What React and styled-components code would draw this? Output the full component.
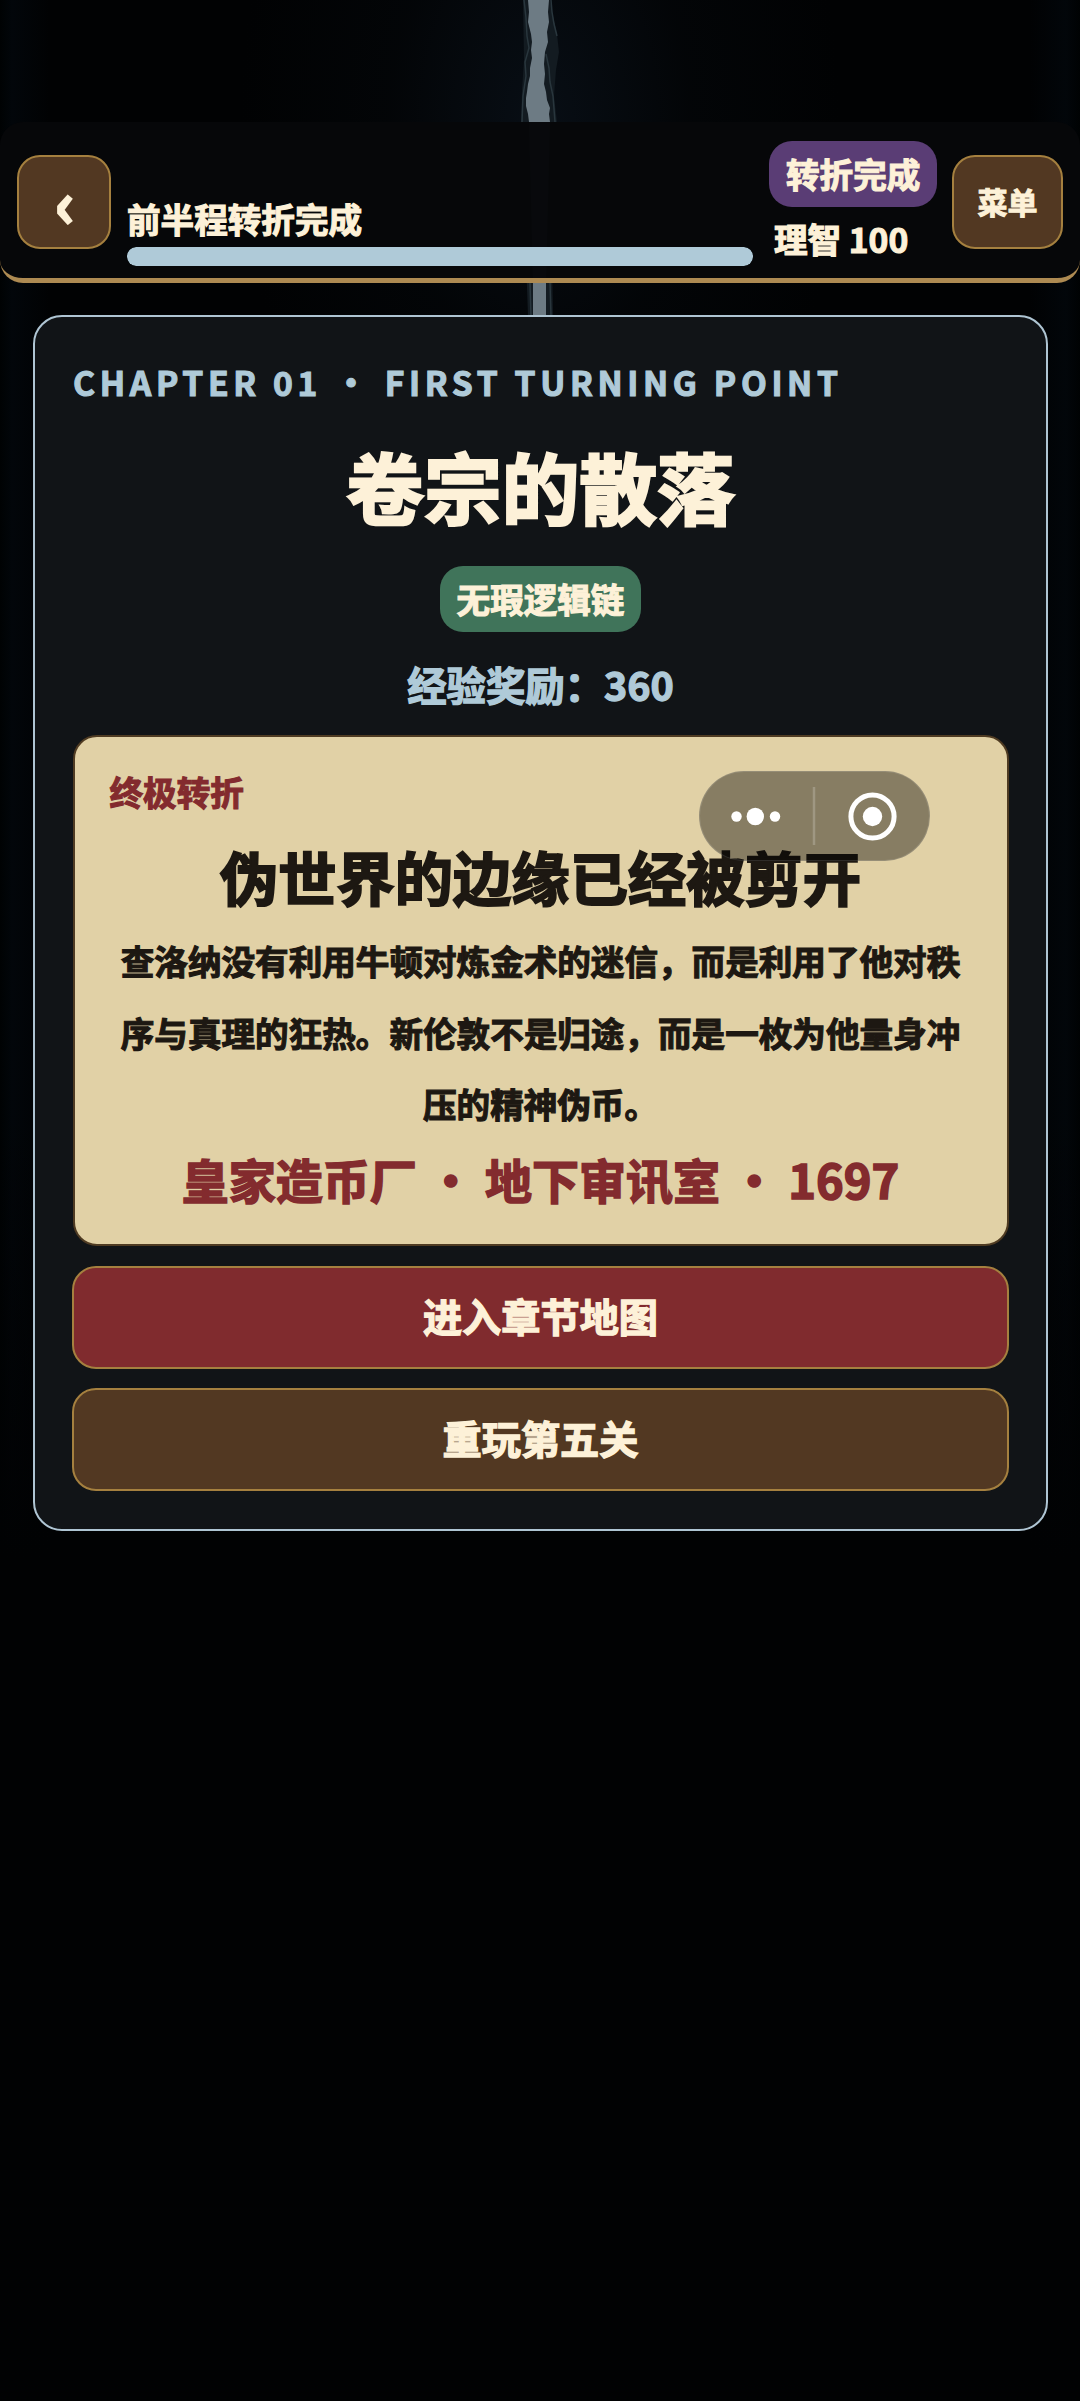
import React from 'react';
import styled, { createGlobalStyle } from 'styled-components';

const GlobalStyle = createGlobalStyle`
  * {
    box-sizing: border-box;
    -webkit-text-stroke: 0.034em currentColor;
  }

  body {
    margin: 0;
    background: #010203;
    font-family: 'Noto Sans CJK SC', sans-serif;
    font-weight: 700;
    color: #fdf1d8;
  }
`;

const Page = styled.div`
  position: relative;
  width: 1080px;
  height: 2401px;
  padding-top: 122px;
  overflow: hidden;
  background:
    radial-gradient(ellipse 300px 480px at 540px 120px, #080e15 0%, rgba(4, 7, 10, 0.6) 50%, rgba(1, 2, 3, 0) 100%),
    linear-gradient(180deg, rgba(1, 2, 3, 0) 1100px, #010203 1560px),
    linear-gradient(90deg, #000203 0, #02060a 12px, #010203 50px, #010203 1030px, #02060a 1066px, #000203 1080px);
`;

const Rift = styled.svg`
  position: absolute;
  left: 500px;
  top: 0;
  width: 80px;
  height: 316px;
`;

const Header = styled.header`
  position: relative;
  display: flex;
  align-items: flex-start;
  height: 161px;
  padding: 19px 17px 0;
  background: rgba(6, 7, 9, 0.98);
  border-bottom: 5px solid #ad8a52;
  border-radius: 23px;
`;

const HeaderButton = styled.button`
  width: ${({ $width }) => $width}px;
  height: 94px;
  margin: 14px 0 0;
  padding: ${({ $pad }) => $pad};
  background: #523822;
  border: 2px solid #a5803f;
  border-radius: 23px;
  color: #fdf1d8;
  font: inherit;
  font-size: ${({ $size }) => $size}px;
  line-height: 1;
`;

const Progress = styled.div`
  width: 626px;
  margin: 54px 0 0 16px;
`;

const Stage = styled.div`
  font-size: 33.6px;
  line-height: 48px;
`;

const Track = styled.div`
  height: 19px;
  margin-top: 4px;
  border-radius: 9px;
  background: #1c2226;
  overflow: hidden;
`;

const Fill = styled.div`
  height: 100%;
  background: #afcad8;
  border-radius: 9px;
`;

const Status = styled.div`
  width: 168px;
  margin: 0 15px 0 16px;
`;

const Badge = styled.span`
  display: block;
  width: fit-content;
  height: 66px;
  padding: 0 17px;
  border-radius: 23px;
  background: ${({ $color }) => $color};
  font-size: 33.6px;
  line-height: 66px;
  white-space: nowrap;
`;

const Sanity = styled.div`
  padding: 8px 0 0 5px;
  font-size: 33.6px;
  line-height: 48px;
  white-space: nowrap;
`;

const Panel = styled.main`
  position: relative;
  display: flex;
  flex-direction: column;
  align-items: center;
  width: 1015px;
  height: 1216px;
  margin: 32px 0 0 33px;
  padding: 0 38px;
  background: rgba(17, 20, 23, 0.99);
  border: 2px solid #afc5d3;
  border-radius: 29px;
`;

const Eyebrow = styled.div`
  align-self: flex-start;
  margin-top: 39px;
  font-size: 33.6px;
  line-height: 52px;
  letter-spacing: 4.65px;
  color: #afcad8;
  white-space: pre;
`;

const Title = styled.h1`
  margin: 22px 0 26px;
  font-size: 77.7px;
  line-height: 110px;
`;

const Reward = styled.div`
  margin: 23px 0 22px;
  font-size: 39.4px;
  line-height: 58px;
  color: #afcad8;
`;

const Paper = styled.section`
  display: flex;
  flex-direction: column;
  align-items: center;
  width: 936px;
  height: 511px;
  padding: 0 35px;
  background: #e1d1a6;
  border: 2px solid #4f3b22;
  border-radius: 24px;
  color: #1d1812;
`;

const Label = styled.div`
  align-self: flex-start;
  margin-top: 31px;
  font-size: 33.6px;
  line-height: 48px;
  color: #832b2e;
`;

const Heading = styled.h2`
  margin: 19px 0 8px;
  font-size: 58.3px;
  line-height: 82px;
`;

const Story = styled.p`
  width: 842px;
  margin: 0;
  font-size: 33.6px;
  line-height: 71.7px;
  text-align: center;
`;

const Place = styled.div`
  margin-top: 5px;
  font-size: 47px;
  line-height: 68px;
  color: #832b2e;
  white-space: pre;
`;

const Action = styled.button`
  width: 937px;
  height: 103px;
  flex: none;
  margin: ${({ $gap }) => $gap}px 0 0;
  padding: 0 0 4px;
  background: ${({ $color }) => $color};
  border: 2px solid #a5803f;
  border-radius: 24px;
  color: #fdf1d8;
  font: inherit;
  font-size: 39.2px;
  line-height: 1;
`;

const Capsule = styled.div`
  position: absolute;
  left: 699px;
  top: 771px;
  width: 231px;
  height: 90px;
  background: rgba(0, 0, 0, 0.4);
  border: 1px solid rgba(255, 255, 255, 0.12);
  border-radius: 45px;

  svg {
    display: block;
  }
`;

const App = () => {
  const progress = 100;

  return (
    <Page>
      <GlobalStyle />
      <Rift viewBox="0 0 80 316">
        <path d="M23 0 L24 60 L22 90 L21 122 L26 260 L28 316 H53 L52 260 L57 122 L54 96 L56 70 L59 52 L57 34 L53 16 L50 0Z" fill="#131b21" />
        <path d="M28 0 L29 12 L28 22 L31 34 L32 42 L31 50 L32 58 L30 68 L30 76 L28 84 L27 92 L26 98 L26 106 L28 114 L29 122 L33 280 L33 316 H46 L46 280 L50 122 L49 114 L50 108 L47 100 L46 92 L44 84 L45 74 L44 64 L45 52 L48 42 L47 32 L49 22 L48 12 L49 0Z" fill="#6d7b84" />
        <path d="M51 0 L52 12 L54 24 L57 36 M46 54 L49 68 L50 82 L53 96 L55 122 M24 0 L26 18 L27 36 L29 48 L25 62 L26 76 L23 96 L22 122 M30 283 L31 316 M50 283 L51 316" fill="none" stroke="#29363d" strokeWidth="1.5" />
      </Rift>
      <Header>
        <HeaderButton $width={94} $size={63} $pad="0 0 4px 2px">‹</HeaderButton>
        <Progress>
          <Stage>前半程转折完成</Stage>
          <Track>
            <Fill style={{ width: `${progress}%` }} />
          </Track>
        </Progress>
        <Status>
          <Badge $color="#5a3d75">转折完成</Badge>
          <Sanity>理智 100</Sanity>
        </Status>
        <HeaderButton $width={111} $size={30} $pad="0 0 3px">菜单</HeaderButton>
      </Header>
      <Panel>
        <Eyebrow>CHAPTER 01 · FIRST TURNING POINT</Eyebrow>
        <Title>卷宗的散落</Title>
        <Badge $color="#40745a">无瑕逻辑链</Badge>
        <Reward>经验奖励：360</Reward>
        <Paper>
          <Label>终极转折</Label>
          <Heading>伪世界的边缘已经被剪开</Heading>
          <Story>
            查洛纳没有利用牛顿对炼金术的迷信，而是利用了他对秩序与真理的狂热。新伦敦不是归途，而是一枚为他量身冲压的精神伪币。
          </Story>
          <Place>皇家造币厂 · 地下审讯室 · 1697</Place>
        </Paper>
        <Action $color="#802b2e" $gap={20}>进入章节地图</Action>
        <Action $color="#523822" $gap={19}>重玩第五关</Action>
      </Panel>
      <Capsule>
        <svg width="229" height="88" viewBox="0 0 229 88">
          <g fill="#fff">
            <circle cx="36.5" cy="44.5" r="5.2" />
            <circle cx="55.3" cy="44.5" r="8.7" />
            <circle cx="75" cy="44.5" r="5.2" />
            <circle cx="172.5" cy="44.5" r="9.7" />
          </g>
          <path d="M114 15V73" stroke="#fff" strokeOpacity="0.2" strokeWidth="2.5" />
          <circle cx="172.5" cy="44.5" r="21.6" fill="none" stroke="#fff" strokeWidth="5" />
        </svg>
      </Capsule>
    </Page>
  );
};

export default App;
